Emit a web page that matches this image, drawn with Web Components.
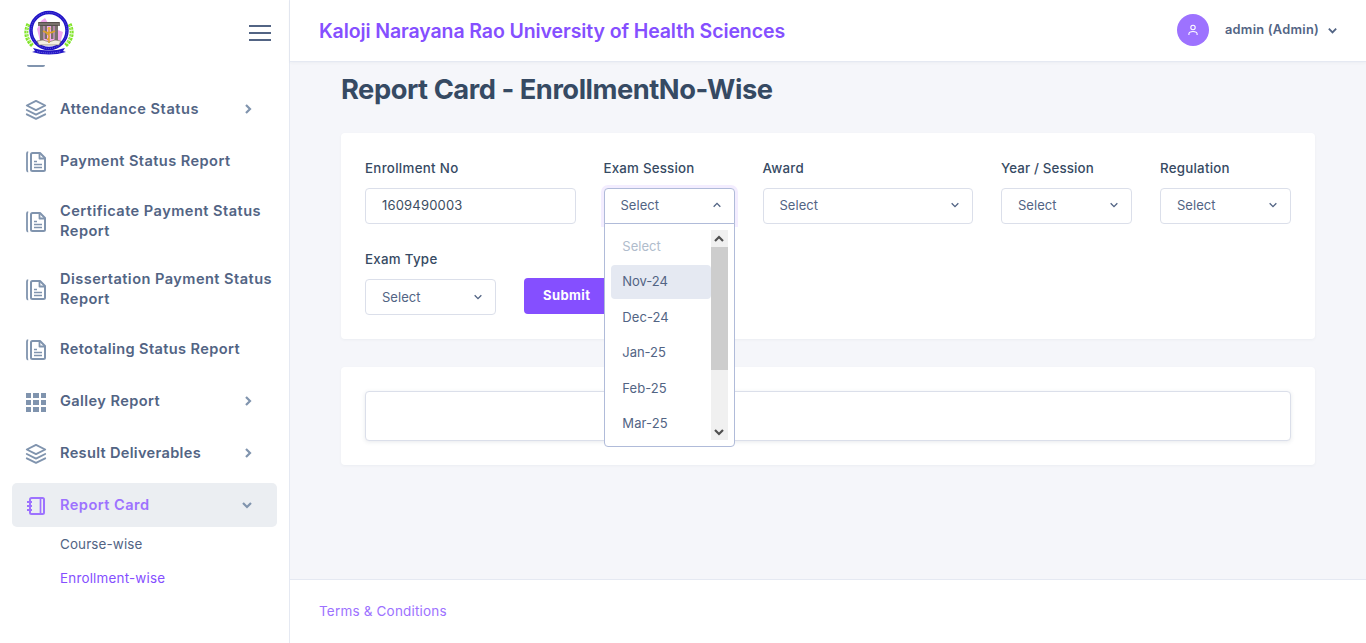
<!DOCTYPE html>
<html lang="en"><head><meta charset="utf-8"><title>Report Card</title>
<style>
html,body{margin:0;height:100%}
body{font-family:Inter,"Open Sans",sans-serif;background:#f5f6fa;color:#526484;overflow:hidden}
</style></head><body>
<app-shell>
 <side-bar slot="side">
  <nav-item icon="layers" arrow="right"><fit-text w="139">Attendance Status</fit-text></nav-item>
  <nav-item icon="docs"><fit-text w="170.5">Payment Status Report</fit-text></nav-item>
  <nav-item icon="docs" tall><fit-text w="201">Certificate Payment Status</fit-text><br><fit-text w="50">Report</fit-text></nav-item>
  <nav-item icon="docs" tall><fit-text w="212">Dissertation Payment Status</fit-text><br><fit-text w="50">Report</fit-text></nav-item>
  <nav-item icon="docs"><fit-text w="180">Retotaling Status Report</fit-text></nav-item>
  <nav-item icon="grid" arrow="right"><fit-text w="100">Galley Report</fit-text></nav-item>
  <nav-item icon="layers" arrow="right"><fit-text w="141">Result Deliverables</fit-text></nav-item>
  <nav-item icon="book" arrow="down" active><fit-text w="89.5">Report Card</fit-text></nav-item>
  <sub-item><fit-text w="82.500">Course-wise</fit-text></sub-item>
  <sub-item active><fit-text w="105.300">Enrollment-wise</fit-text></sub-item>
 </side-bar>
 <top-bar slot="top"><fit-text w="466">Kaloji Narayana Rao University of Health Sciences</fit-text><fit-text slot="user" w="94">admin (Admin)</fit-text></top-bar>
 <page-title><fit-text w="431.500">Report Card - EnrollmentNo-Wise</fit-text></page-title>
 <ui-card class="form">
  <form-row>
   <form-field span="3"><fit-text slot="label" w="93.500">Enrollment No</fit-text><text-box><fit-text w="80.500">1609490003</fit-text></text-box></form-field>
   <form-field span="2"><fit-text slot="label" w="91">Exam Session</fit-text>
    <select-box open><fit-text w="38.500">Select</fit-text>
     <option-list slot="menu">
      <option-item disabled><fit-text w="38.500">Select</fit-text></option-item>
      <option-item current><fit-text w="45.500">Nov-24</fit-text></option-item>
      <option-item><fit-text w="46.500">Dec-24</fit-text></option-item>
      <option-item><fit-text w="43.500">Jan-25</fit-text></option-item>
      <option-item><fit-text w="44.500">Feb-25</fit-text></option-item>
      <option-item><fit-text w="45.500">Mar-25</fit-text></option-item>
     </option-list>
    </select-box></form-field>
   <form-field span="3"><fit-text slot="label" w="41.500">Award</fit-text><select-box><fit-text w="38.500">Select</fit-text></select-box></form-field>
   <form-field span="2"><fit-text slot="label" w="92.800">Year / Session</fit-text><select-box><fit-text w="38.500">Select</fit-text></select-box></form-field>
   <form-field span="2"><fit-text slot="label" w="69.800">Regulation</fit-text><select-box><fit-text w="38.500">Select</fit-text></select-box></form-field>
   <form-field span="2"><fit-text slot="label" w="72.500">Exam Type</fit-text><select-box low><fit-text w="38.500">Select</fit-text></select-box></form-field>
   <submit-button><fit-text w="47.500">Submit</fit-text></submit-button>
  </form-row>
 </ui-card>
 <ui-card><result-panel></result-panel></ui-card>
 <page-footer slot="foot"><fit-text w="127.800">Terms &amp; Conditions</fit-text></page-footer>
</app-shell>
<script>
const icons={
layers:'<svg width="22" height="22" viewBox="0 0 22 22" fill="none" stroke="currentColor" stroke-width="1.9" stroke-linejoin="round" stroke-linecap="round"><path d="M11 1.9 20.2 6.5 11 11.1 1.8 6.5Z"/><path d="m1.8 11 9.2 4.6 9.2-4.6M1.8 15.3 11 19.9l9.2-4.6"/></svg>',
docs:'<svg width="22" height="22" viewBox="0 0 22 22" fill="none" stroke="currentColor" stroke-width="2" stroke-linejoin="round"><path d="M3.200 1.200Q2 1.200 2 2.500v16.500q0 1.500 1.200 1.500" stroke-width="1.800"/><path d="M7.500 2H15l5 5v11.500a1.500 1.500 0 0 1-1.500 1.500h-11A1.500 1.500 0 0 1 6 18.500v-15A1.500 1.500 0 0 1 7.500 2Z"/><path d="M14.500 2.500v5H20" stroke-width="1.800"/><path d="M9 10.500h3M9 13.500h8M9 16.500h8" stroke-width="1.500"/></svg>',
grid:'<svg width="22" height="22" viewBox="0 0 22 22" fill="currentColor"><path d="M1 2h5v5H1zM8 2h6v5H8zM16 2h5v5h-5zM1 9h5v5H1zM8 9h6v5H8zM16 9h5v5h-5zM1 16h5v5H1zM8 16h6v5H8zM16 16h5v5h-5z"/></svg>',
book:'<svg width="22" height="22" viewBox="0 0 22 22" fill="none" stroke="currentColor" stroke-width="2"><rect x="5" y="3" width="14" height="16" rx="1.500"/><path d="M15.500 3v16" stroke-width="1.700"/><path d="M2 7h5M2 11h5M2 15h5"/></svg>'
};
const chev=(s,w,d)=>`<svg width="${s}" height="${s}" viewBox="0 0 12 12" fill="none" stroke="currentColor" stroke-width="${w}"><path d="${d}"/></svg>`;
const DOWN='m2 4 4 4 4-4',UP='m2 8 4-4 4 4',RIGHT='m4 2 4 4-4 4';
function el(name,render){customElements.define(name,class extends HTMLElement{constructor(){super();this.attachShadow({mode:'open'}).innerHTML=typeof render==='function'?render(this):render;}});}
el('app-shell',`<style>:host{display:flex;height:643px;width:1366px}.m{flex:1;display:flex;flex-direction:column;min-width:0}.c{flex:1;padding:10px 51px 0;min-height:0}</style><slot name="side"></slot><div class="m"><slot name="top"></slot><div class="c"><slot></slot></div><slot name="foot"></slot></div>`);
el('uni-crest',`<style>:host{display:block;height:46px}svg{display:block}</style><svg width="52" height="46" viewBox="0 0 52 46">
<g fill="none" stroke="#82e52b" stroke-width="4" stroke-dasharray="2.600 .9"><path d="M5.500 14C1.500 22 3 30 10 36M46.500 14C50.500 22 49 30 42 36"/></g>
<g fill="none" stroke="#d9f8b8" stroke-width=".7"><path d="M5 15C2 23 4 29 9 34M47 15c3 8 1 14-4 19"/></g>
<circle cx="26" cy="20.500" r="18" fill="#fff" stroke="#2113c7" stroke-width="3.400"/><circle cx="26" cy="20.500" r="18" fill="none" stroke="#7a74e0" stroke-width=".7" stroke-dasharray="1 1"/>
<path d="m18 11 4-3 3 5 9 1 1 6 5 2-2 8-8 2-13-1-3-12Z" fill="#f2a8ec"/>
<path d="M15 12h22v4H15zM17 16h3.500v15H17zM21.500 16H24v13h-2.500zM28 16h2.500v13H28zM31.500 16H35v15h-3.500z" fill="#79716c"/><path d="M16 12.500h20M17 15.500h18" stroke="#49443f" stroke-width=".7"/>
<path d="M14 31q6-2.500 12 1 6-3.500 12-1l-2 4H16Z" fill="#f4efe1" stroke="#706754" stroke-width=".6"/>
<path d="M26 17v16M20 21q6 3.500 12 0M23 23q6 3 1 7" fill="none" stroke="#dba12a" stroke-width="1.500"/><circle cx="26" cy="18.500" r="1.500" fill="#edb641"/>
<path d="M10 38q16 5 32 0l-2 3 3 1q-17 5-34 0l3-1Z" fill="#2417c6"/><path d="M14 41.500q12 3 24 0" fill="none" stroke="#8a84e8" stroke-width=".7" stroke-dasharray="1.200 .8"/></svg>`);
el('side-bar',`<style>:host{display:flex;flex-direction:column;width:289px;height:643px;background:#fff;border-right:1px solid #e5e9f2;flex:none}
header{height:65px;display:flex;justify-content:space-between;padding:0 18px 0 23px;align-items:center;box-sizing:border-box}
.b{width:22px;height:12px;border-top:2px solid #526484;border-bottom:2px solid #526484;display:flex;align-items:center}.b i{height:2px;width:100%;background:#526484}
nav{flex:1;overflow:hidden;display:flex;flex-direction:column;padding:0 12px}.p{height:14px;margin-bottom:8px;flex:none;padding-left:15px}.p i{display:block;width:18px;height:2px;border-radius:0 0 3px 3px;background:#8094ae}</style>
<header><uni-crest></uni-crest><span class="b"><i></i></span></header><nav><div class="p"><i></i></div><slot></slot></nav>`);
el('nav-item',h=>`<style>:host{display:flex;align-items:center;flex:none;height:44px;margin-bottom:8px;padding:0 23px 0 13px;box-sizing:border-box;border-radius:5px;font-size:14.600px;font-weight:600;color:#526484;line-height:20px}
:host([tall]){height:60px}:host([active]){background:#ebeef2;color:#9d72ff;margin-bottom:0}.i{width:22px;height:22px;margin-top:2px;color:#8094ae}:host([active]) .i{color:#9d72ff}.i svg,.a svg{display:block}.t{margin-left:13px;flex:1;white-space:nowrap}.a{color:#8094ae}:host([arrow=down]){padding-right:24.500px}</style><span class="i">${icons[h.getAttribute('icon')]}</span><span class="t"><slot></slot></span>${h.hasAttribute('arrow')?`<span class="a">${chev(12,2.200,h.getAttribute('arrow')==='down'?DOWN:RIGHT)}</span>`:''}`);
el('sub-item',`<style>:host{display:block;height:34px;line-height:34px;padding-left:48px;font-size:13.400px;color:#526484}:host([active]){color:#854fff}</style><slot></slot>`);
el('top-bar',`<style>:host{display:flex;height:61px;flex:none;background:#fff;border-bottom:1px solid #e5e9f2;box-shadow:0 1px 3px rgba(54,74,99,.05);align-items:center;padding:0 28px 0 29px;font-size:19.500px;font-weight:600;color:#854fff}.s{flex:1}
.av{width:32px;height:32px;border-radius:50%;background:#9d72ff;display:flex;align-items:center;justify-content:center;margin-right:16px;margin-bottom:1px}.u{font-size:12.800px;color:#526484;width:102px;margin-bottom:2px}.c{height:12px;color:#526484;margin-top:1px}.c svg{display:block}</style><slot></slot><span class="s"></span><span class="av"><svg width="12" height="12" viewBox="0 0 12 12" fill="none" stroke="#fff" stroke-width="1.100"><circle cx="6" cy="3.500" r="2.200"/><path d="M1.900 11V9.800Q2.200 7.500 6 7.500t4.100 2.300V11"/></svg></span><span class="u"><slot name="user"></slot></span><span class="c">${chev(11,2,DOWN)}</span>`);
el('page-title',`<style>:host{display:block;height:61px;line-height:36px;font-size:27.300px;font-weight:650;color:#364a63}</style><slot></slot>`);
el('ui-card',`<style>:host{display:block;background:#fff;border-radius:4px;padding:24px;margin-bottom:28px;box-shadow:0 1px 3px rgba(54,74,99,.05)}</style><slot></slot>`);
el('form-row',`<style>:host{display:grid;grid-template-columns:repeat(12,51.500px);column-gap:28px;row-gap:24px;width:926px}</style><slot></slot>`);
el('form-field',h=>`<style>:host{display:block;grid-column:span ${h.getAttribute('span')}}.l{height:31px;line-height:23px;font-size:13.300px;font-weight:500;color:#364a63;white-space:nowrap}</style><div class="l"><slot name="label"></slot></div><slot></slot>`);
el('text-box',`<style>:host{display:flex;align-items:center;box-sizing:border-box;height:36px;border:1px solid #dbdfea;border-radius:4px;padding:0 16px 2px;font-size:13px;color:#3c4d62;background:#fff}</style><slot></slot>`);
el('select-box',h=>`<style>:host{display:flex;position:relative;align-items:center;justify-content:space-between;box-sizing:border-box;height:36px;border:1px solid #dbdfea;border-radius:4px;padding:0 12px 2px 16px;font-size:13px;color:#526484;background:#fff}:host([low]){padding-bottom:0}:host([open]){padding-left:15.500px;border-color:#b0bbd9;border-radius:4px 4px 0 0;box-shadow:0 0 0 3px #f3edff;margin-left:.5px}svg{display:block}</style><slot></slot>${chev(10,1.600,h.hasAttribute('open')?UP:DOWN)}<slot name="menu"></slot>`);
el('option-list',`<style>:host{position:absolute;z-index:5;left:-1px;right:-1px;top:34px;height:224px;box-sizing:border-box;background:#fff;border:1px solid #b0bbd9;border-radius:0 0 4px 4px;padding:6px;display:flex}.l{flex:1;height:210px;overflow:hidden}.s{width:17px;height:210px;background:#f0f0f0;display:flex;flex-direction:column;color:#505050}.s i{height:123px;background:#cdcdcd}.s span{height:17px;display:flex;align-items:center;justify-content:center}.s b{flex:1}</style><div class="l"><slot></slot></div><div class="s"><span>${chev(12,2.200,UP)}</span><i></i><b></b><span>${chev(12,2.200,DOWN)}</span></div>`);
el('option-item',`<style>:host{display:block;height:33.400px;line-height:33.300px;margin-bottom:2px;padding-left:11.300px;border-radius:4px;color:#526484}:host([disabled]){color:#b0bccc}:host([current]){background:#e5e9f2}</style><slot></slot>`);
el('submit-button',`<style>:host{display:flex;grid-column:span 2;align-self:end;align-items:center;box-sizing:border-box;height:36px;width:86px;padding:0 19px 2px;background:#854fff;color:#fff;border-radius:4px;font-size:13px;font-weight:700;margin-bottom:1px}</style><slot></slot>`);
el('result-panel',`<style>:host{display:block;height:50px;box-sizing:border-box;border:1px solid #dbdfea;border-radius:4px;background:#fff;box-shadow:0 1px 4px rgba(54,74,99,.12)}</style>`);
el('page-footer',`<style>:host{display:block;flex:none;height:63px;line-height:63px;background:#fff;border-top:1px solid #e5e9f2;padding-left:29px;font-size:13.500px;color:#9d72ff}</style><slot></slot>`);
/* Spreads the tracking of one line of text so that it fills the width given in "w". */
customElements.define('fit-text',class extends HTMLElement{
 constructor(){super();this.attachShadow({mode:'open'}).innerHTML='<style>:host{display:inline-block;white-space:nowrap}</style><slot></slot>';}
 connectedCallback(){const w=+this.getAttribute('w'),n=this.textContent.length;this.style.letterSpacing=((w-this.getBoundingClientRect().width)/n).toFixed(3)+'px';}
});
</script></body></html>
